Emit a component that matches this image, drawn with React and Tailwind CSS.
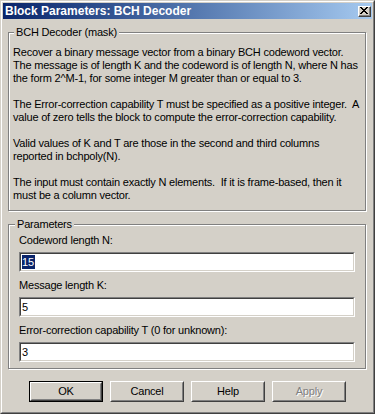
import React from 'react';

const raised = 'border border-t-white border-l-white border-r-[#404040] border-b-[#404040]';
const raisedInner = 'border border-t-[#d4d0c8] border-l-[#d4d0c8] border-r-[#808080] border-b-[#808080]';

const CloseGlyph = () => (
  <svg width="8" height="7" viewBox="0 0 8 7" shapeRendering="crispEdges">
    <path d="M0 0h2v1h-2z M6 0h2v1h-2z M1 1h2v1h-2z M5 1h2v1h-2z M2 2h4v1h-4z M3 3h2v1h-2z M2 4h4v1h-4z M1 5h2v1h-2z M5 5h2v1h-2z M0 6h2v1h-2z M6 6h2v1h-2z" fill="#000" />
  </svg>
);

const Field = ({ label, value, selected, first }) => (
  <div className={first ? '' : 'mt-[7px]'}>
    <div className="whitespace-nowrap">{label}</div>
    <div className="mt-[5px] h-[20px] border border-t-[#808080] border-l-[#808080] border-r-white border-b-white">
      <div className="h-full bg-white border border-t-[#404040] border-l-[#404040] border-r-[#d4d0c8] border-b-[#d4d0c8] flex items-center pl-px">
        {selected ? (
          <span className="bg-[#0a246a] text-white leading-[14px] pr-px">{value}</span>
        ) : (
          <span>{value}</span>
        )}
      </div>
    </div>
  </div>
);

const Button = ({ label, isDefault, disabled }) => {
  const face = (
    <div className={`h-full ${raised}`}>
      <div className={`h-full ${raisedInner} flex items-center justify-center`}>
        {disabled ? (
          <span className="text-[#808080] [text-shadow:1px_1px_0_#fff]">{label}</span>
        ) : (
          <span>{label}</span>
        )}
      </div>
    </div>
  );
  return (
    <div className={`w-[74px] h-[21px] ${isDefault ? 'border border-black' : ''}`}>
      {isDefault ? (
        <div className="h-full border border-t-white border-l-white border-r-[#404040] border-b-[#404040]">
          <div className={`h-full ${raisedInner} flex items-center justify-center`}>{label}</div>
        </div>
      ) : (
        face
      )}
    </div>
  );
};

export default function App() {
  return (
    <div className="w-[375px] h-[414px] bg-[#d4d0c8] border border-t-[#d4d0c8] border-l-[#d4d0c8] border-r-[#404040] border-b-[#404040] font-['Liberation_Sans',Arial,sans-serif] text-[11px] leading-[13px] tracking-[-0.2px] text-black">
      <div className="h-full border border-t-white border-l-white border-r-[#808080] border-b-[#808080] p-px flex flex-col">
        {/* title bar */}
        <div className="h-[16px] bg-gradient-to-r from-[#0a246a] to-[#a6caf0] flex items-center justify-between pl-[2px] pr-px">
          <span className="text-white font-bold text-[12px] leading-[16px] tracking-normal whitespace-nowrap">Block Parameters: BCH Decoder</span>
          <div className={`w-[13px] h-[11px] ${raised} bg-[#d4d0c8]`}>
            <div className="h-full border-r border-b border-[#808080] flex items-center justify-center">
              <CloseGlyph />
            </div>
          </div>
        </div>

        {/* mask description */}
        <div className="relative ml-[5px] mt-[13px] w-[358px] border border-[#808080] shadow-[inset_1px_1px_0_#fff,1px_1px_0_#fff] pl-[4px] pt-[13px] pb-[8px]">
          <span className="absolute left-[5px] top-[-7px] px-[2px] bg-[#d4d0c8] whitespace-nowrap">BCH Decoder (mask)</span>
          <div className="whitespace-pre">
            <p>Recover a binary message vector from a binary BCH codeword vector.<br />The message is of length K and the codeword is of length N, where N has<br />the form 2^M-1, for some integer M greater than or equal to 3.</p>
            <p className="mt-[13px]">The Error-correction capability T must be specified as a positive integer.  A<br />value of zero tells the block to compute the error-correction capability.</p>
            <p className="mt-[13px]">Valid values of K and T are those in the second and third columns<br />reported in bchpoly(N).</p>
            <p className="mt-[13px]">The input must contain exactly N elements.  If it is frame-based, then it<br />must be a column vector.</p>
          </div>
        </div>

        {/* parameters */}
        <div className="relative ml-[5px] mt-[13px] w-[358px] border border-[#808080] shadow-[inset_1px_1px_0_#fff,1px_1px_0_#fff] px-[10px] pt-[9px] pb-[6px]">
          <span className="absolute left-[6px] top-[-7px] px-[2px] bg-[#d4d0c8] whitespace-nowrap">Parameters</span>
          <Field first label="Codeword length N:" value="15" selected />
          <Field label="Message length K:" value="5" />
          <Field label="Error-correction capability T (0 for unknown):" value="3" />
        </div>

        {/* buttons */}
        <div className="mt-[12px] flex justify-center gap-[7px]">
          <Button label="OK" isDefault />
          <Button label="Cancel" />
          <Button label="Help" />
          <Button label="Apply" disabled />
        </div>
      </div>
    </div>
  );
}
